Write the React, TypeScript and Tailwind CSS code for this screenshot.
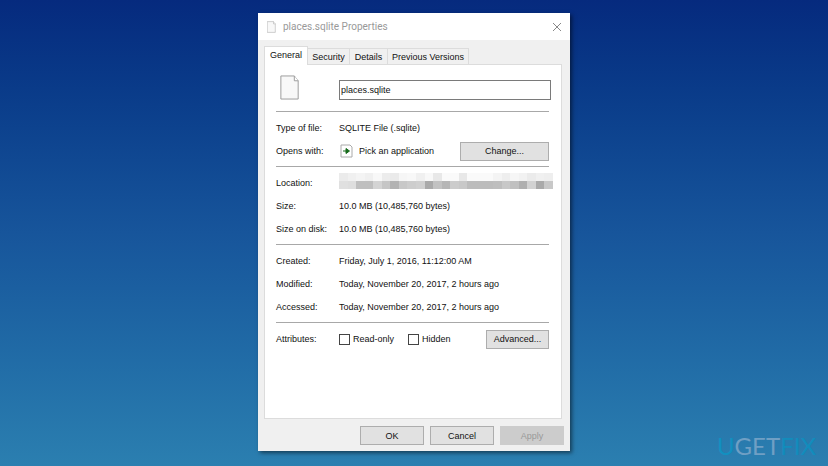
import type { ReactNode } from "react";

const topShades = ["#ebebeb", "#f0f0f0", "#f4f4f4", "#f0f0f0", "#f8f8f8", "#ececec", "#eaeaea", "#f6f6f6", "#f8f8f8", "#f0f0f0", "#f8f8f8", "#e8e8e8", "#fafafa", "#fafafa", "#e8e8e8", "#fafafa", "#fafafa", "#fafafa", "#f4f4f4", "#eeeeee", "#f6f6f6", "#f2f2f2", "#ebebeb", "#f0f0f0", "#eeeeee"];
const bottomShades = ["#e0e0e0", "#dedede", "#bfbfbf", "#bfbfbf", "#d4d4d4", "#c6c6c6", "#b2b2b2", "#c8c8c8", "#cdcdcd", "#d0d0d0", "#aaaaaa", "#c2c2c2", "#b6b6b6", "#cccccc", "#c8c8c8", "#bcbcbc", "#bcbcbc", "#bcbcbc", "#bebebe", "#c8c8c8", "#c0c0c0", "#b0b0b0", "#d2d2d2", "#aaaaaa", "#c8c8c8"];

function PageIcon({ className }: { className: string }) {
  return (
    <svg viewBox="0 0 20 26" className={className} aria-hidden="true">
      <path d="M.5 1h14l4 5v19H.5z" fill="#f8f8f8" stroke="#9a9a9a" strokeWidth="1" />
      <path d="M14.500 1v5h4" fill="#fff" stroke="#9a9a9a" strokeWidth="1" />
    </svg>
  );
}

function Row({ label, children }: { label: string; children: ReactNode }) {
  return (
    <div className="flex h-[22px] items-center">
      <dt className="w-[63px] shrink-0">{label}</dt>
      <dd className="flex min-w-0 flex-1 items-center">{children}</dd>
    </div>
  );
}

function Section({ children }: { children: ReactNode }) {
  return <dl className="flex flex-col gap-px border-t border-[#a8a8a8] pt-[5px] pb-1">{children}</dl>;
}

function Check({ label }: { label: string }) {
  return (
    <label className="flex items-center gap-[3px]">
      <input type="checkbox" className="size-[11px] appearance-none border border-[#444] bg-white checked:bg-[#444]" />
      {label}
    </label>
  );
}

const button = "h-[19px] border border-[#adadad] bg-[#e1e1e1] text-center";

export default function App() {
  return (
    <main className="relative flex min-h-screen items-start justify-center bg-linear-to-b from-[#062a7e] via-[#17559b] to-[#2b7fb0] pt-[13px] font-['Liberation_Sans',sans-serif] text-[9px] leading-3 text-[#111]">
      <section className="w-[312px] bg-[#f0f0f0] px-1.5 pb-1.5 shadow-[2px_2px_4px_rgba(0,0,0,0.5)]">
        <header className="-mx-1.5 flex h-[27px] items-center bg-white pr-2 pl-[9px]">
          <PageIcon className="h-3 w-[9px]" />
          <h1 className="ml-[7px] flex-1 font-['Roboto',sans-serif] text-[10px] text-[#999]">places.sqlite Properties</h1>
          <button type="button" aria-label="Close" className="text-[#888]">
            <svg viewBox="0 0 10 10" className="size-[10px]" fill="none" stroke="currentColor">
              <path d="M1 1l8 8M9 1l-8 8" />
            </svg>
          </button>
        </header>
        <nav className="flex h-6 items-end pt-1.5" role="tablist">
          <button type="button" role="tab" aria-selected="true" className="relative -mb-px h-[19px] w-11 border border-b-0 border-[#dcdcdc] bg-white pb-0.5">General</button>
          <button type="button" role="tab" aria-selected="false" className="h-4 w-[42px] border border-b-0 border-l-0 border-[#dcdcdc]">Security</button>
          <button type="button" role="tab" aria-selected="false" className="h-4 w-[38px] border border-b-0 border-l-0 border-[#dcdcdc]">Details</button>
          <button type="button" role="tab" aria-selected="false" className="h-4 w-[81px] border border-b-0 border-l-0 border-[#dcdcdc] whitespace-nowrap">Previous Versions</button>
        </nav>
        <div className="mr-0.5 min-h-[355px] border border-[#dcdcdc] bg-white pr-3 pl-[11px]">
          <div className="flex h-[46px] items-center pt-1 pb-px">
            <div className="w-[63px] pl-1">
              <PageIcon className="mb-1 h-[25px] w-5" />
            </div>
            <input aria-label="File name" defaultValue="places.sqlite" className="-mr-0.5 h-5 min-w-0 flex-1 border border-[#7a7a7a] bg-white px-px" />
          </div>
          <Section>
            <Row label="Type of file:">SQLITE File (.sqlite)</Row>
            <Row label="Opens with:">
              <svg viewBox="0 0 13 14" className="mr-1.5 ml-px h-3.5 w-[13px]" aria-hidden="true">
                <path d="M1 1h9l2 2v10H1z" fill="#fff" stroke="#aaa" />
                <path d="M3 7h4M6 4.500l3.500 2.500L6 9.500z" fill="#176b1b" stroke="#176b1b" />
              </svg>
              <span className="flex-1">Pick an application</span>
              <button type="button" className={button + " w-[89px]"}>Change...</button>
            </Row>
          </Section>
          <Section>
            <Row label="Location:">
              <svg viewBox="0 0 25 2" preserveAspectRatio="none" className="-mr-1 mb-1 h-4 min-w-0 flex-1" shapeRendering="crispEdges" role="img" aria-label="Hidden location">
                {topShades.map((c, i) => <rect key={i} x={i} y="0" width="1" height="1" fill={c} />)}
                {bottomShades.map((c, i) => <rect key={i} x={i} y="1" width="1" height="1" fill={c} />)}
              </svg>
            </Row>
            <Row label="Size:">10.0 MB (10,485,760 bytes)</Row>
            <Row label="Size on disk:">10.0 MB (10,485,760 bytes)</Row>
          </Section>
          <Section>
            <Row label="Created:">Friday, July 1, 2016, 11:12:00 AM</Row>
            <Row label="Modified:">Today, November 20, 2017, 2 hours ago</Row>
            <Row label="Accessed:">Today, November 20, 2017, 2 hours ago</Row>
          </Section>
          <Section>
            <Row label="Attributes:">
              <div className="flex flex-1 gap-3.5">
                <Check label="Read-only" />
                <Check label="Hidden" />
              </div>
              <button type="button" className={button + " w-[63px]"}>Advanced...</button>
            </Row>
          </Section>
        </div>
        <footer className="flex justify-end gap-1.5 pt-[7px]">
          <button type="button" className={button + " w-16"}>OK</button>
          <button type="button" className={button + " w-16"}>Cancel</button>
          <button type="button" disabled className="h-[19px] w-16 bg-[#cccccc] text-[#999]">Apply</button>
        </footer>
      </section>
      <div className="absolute right-3 bottom-1.5 font-['Lato',sans-serif] text-[24px] leading-7 text-[#6f9fc4]">
        <span className="text-[#1290c0]">U</span>GET<span className="text-[#128cbc]">FIX</span>
      </div>
    </main>
  );
}
